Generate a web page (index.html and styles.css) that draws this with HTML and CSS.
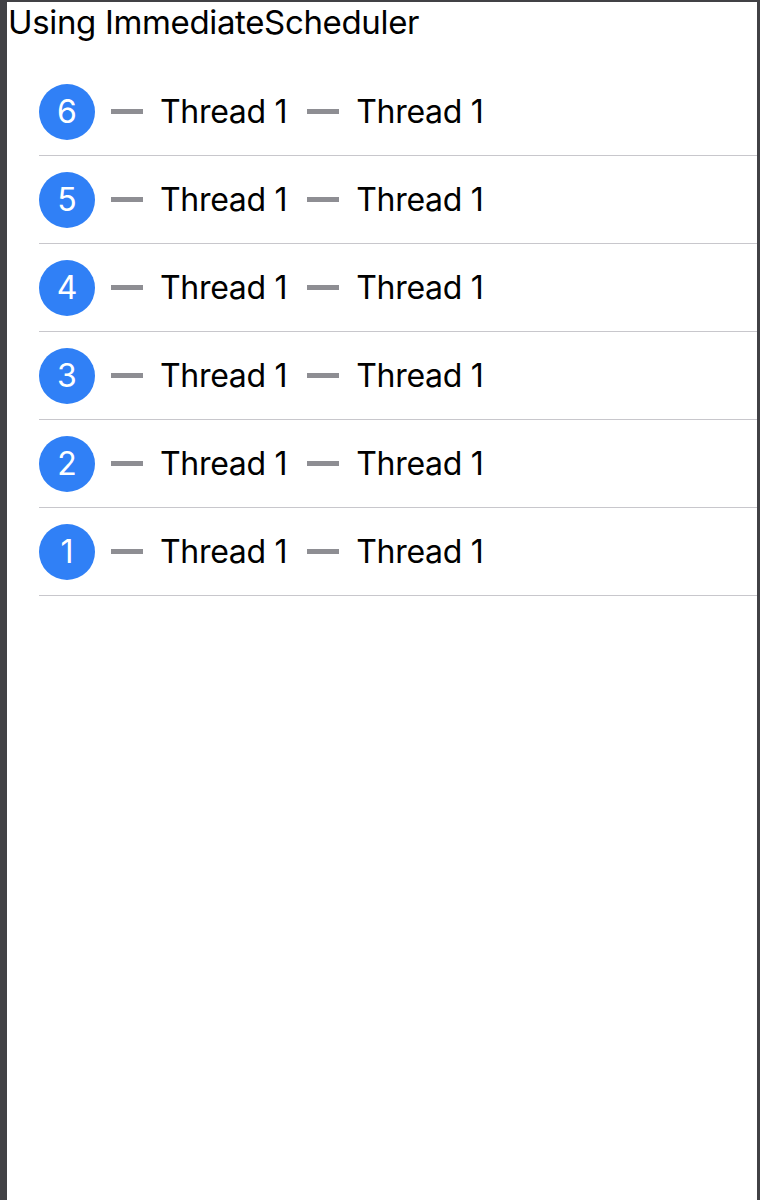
FILE: index.html
```html
<!DOCTYPE html>
<html>
<head>
<meta charset="utf-8">
<link rel="stylesheet" href="styles.css">
</head>
<body>
<div class="frame">
  <div class="screen">
    <div class="title">Using ImmediateScheduler</div>
    <ul class="list">
      <li class="row"><span class="badge">6</span><span class="dash"></span><span class="label">Thread 1</span><span class="dash"></span><span class="label">Thread 1</span></li>
      <li class="row"><span class="badge">5</span><span class="dash"></span><span class="label">Thread 1</span><span class="dash"></span><span class="label">Thread 1</span></li>
      <li class="row"><span class="badge">4</span><span class="dash"></span><span class="label">Thread 1</span><span class="dash"></span><span class="label">Thread 1</span></li>
      <li class="row"><span class="badge">3</span><span class="dash"></span><span class="label">Thread 1</span><span class="dash"></span><span class="label">Thread 1</span></li>
      <li class="row"><span class="badge">2</span><span class="dash"></span><span class="label">Thread 1</span><span class="dash"></span><span class="label">Thread 1</span></li>
      <li class="row"><span class="badge">1</span><span class="dash"></span><span class="label">Thread 1</span><span class="dash"></span><span class="label">Thread 1</span></li>
    </ul>
  </div>
</div>
</body>
</html>
```
FILE: styles.css
```css
html, body {
  margin: 0;
  padding: 0;
  height: 100%;
}
body {
  background: #414145;
  font-family: "Inter", "Liberation Sans", Arial, sans-serif;
  color: #000;
}
.frame {
  height: 100%;
  padding: 2px 3px 0 7px;
  box-sizing: border-box;
}
.screen {
  background: #fff;
  height: 100%;
}
.title {
  font-size: 33px;
  line-height: 40px;
  padding-left: 1px;
  letter-spacing: -0.35px;
}
.list {
  list-style: none;
  margin: 26px 0 0 32px;
  padding: 0;
}
.row {
  display: flex;
  align-items: center;
  height: 87px;
  border-bottom: 1px solid #c8c7cc;
}
.badge {
  width: 56px;
  height: 56px;
  border-radius: 50%;
  background: #3080f6;
  color: #fff;
  font-size: 32px;
  display: flex;
  align-items: center;
  justify-content: center;
  flex: none;
}
.dash {
  width: 32px;
  height: 5px;
  background: #8e8e93;
  margin: 0 17px 0 16px;
  flex: none;
}
.label {
  font-size: 32px;
  letter-spacing: -0.3px;
  margin-right: 4px;
}
```
